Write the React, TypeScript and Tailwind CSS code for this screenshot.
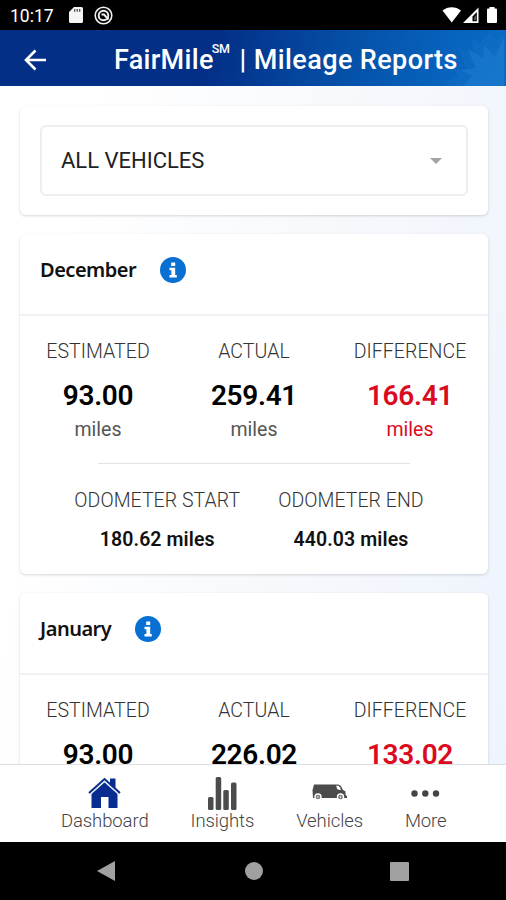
import type { ReactNode } from "react";

type Report = {
  month: string;
  estimated: string;
  actual: string;
  difference: string;
  odometerStart: string;
  odometerEnd: string;
};

const reports: Report[] = [
  {
    month: "December",
    estimated: "93.00",
    actual: "259.41",
    difference: "166.41",
    odometerStart: "180.62",
    odometerEnd: "440.03",
  },
  {
    month: "January",
    estimated: "93.00",
    actual: "226.02",
    difference: "133.02",
    odometerStart: "",
    odometerEnd: "",
  },
];

function StatusBar() {
  return (
    <div className="flex h-[30px] shrink-0 items-center bg-black pl-[10px] pr-2 text-white">
      <span className="w-[44px] pt-[3px] text-[17.5px] leading-none">10:17</span>
      <svg className="ml-[15px]" width="14" height="16" viewBox="0 0 14 16">
        <path d="M5 0h7.500A1.500 1.500 0 0 1 14 1.500v13a1.500 1.500 0 0 1-1.500 1.500h-11A1.500 1.500 0 0 1 0 14.500V5z" fill="#f5f5f5" />
        <path d="M5.700 2v2.800M8.200 2v2.800M10.700 2v2.800" stroke="#444" strokeWidth="1.200" />
      </svg>
      <svg className="ml-[11px]" width="19" height="19" viewBox="0 0 19 19" fill="none" stroke="#f0f0f0">
        <circle cx="9.500" cy="9.500" r="8.300" strokeWidth="1.600" />
        <circle cx="9.500" cy="9.500" r="4.800" strokeWidth="1.900" />
        <path d="M7.500 8.500h2.500l4.500 5" strokeWidth="1.900" />
      </svg>
      <svg className="ml-auto" width="56" height="18" viewBox="0 0 56 18">
        <path d="M0.500 4.500C5.500 0 14 0 19 4.500L9.750 16.500z" fill="#fff" />
        <path d="M36.500 1.500V17H21z" fill="#fff" />
        <path d="M34.800 6V15.300H30.500V10.500z" fill="#000" />
        <path d="M32 11.500L34 9V14.300H32z" fill="#555" />
        <path d="M47.500 1h5v1.500H54a1 1 0 0 1 1 1V16a1 1 0 0 1-1 1h-8a1 1 0 0 1-1-1V3.500a1 1 0 0 1 1-1h1.500z" fill="#fff" />
      </svg>
    </div>
  );
}

function Header() {
  return (
    <header className="relative flex h-[56px] shrink-0 items-center bg-linear-[105deg,#032f87_0%,#032f87_42%,#0550a8_68%,#0762bb_86%,#0a6bc4_100%] text-white">
      <svg className="absolute right-0 top-0" width="60" height="56" viewBox="0 0 60 56">
        <path d="M2 56L0 51L12 47L8 39L20 40L13 18L27 25L26 8L34 13L44 2L51 10L58 5V56z" fill="#1f7acb" opacity="0.22" />
        <path d="M17 56L26 46L14 40L30 38L21 18L37 28L38 15L49 27L58 8V56z" fill="#2384d4" opacity="0.4" />
      </svg>
      <button className="ml-[23px] mt-[3px] w-6" aria-label="Back">
        <svg width="24" height="22" viewBox="0 0 24 22" fill="none" stroke="#fff" strokeWidth="2.600">
          <path d="M23 11H3M12.500 1.500L3 11l9.500 9.500" />
        </svg>
      </button>
      <h1 className="relative ml-[67px] mt-[4px] flex items-center whitespace-nowrap text-[27px] font-medium leading-none tracking-[0.3px]">
        FairMile
        <span className="-ml-[2px] -mt-[22px] text-[12.500px] tracking-[-0.3px]">SM</span>
        <span className="ml-[10px] tracking-[0.4px]">| Mileage Reports</span>
      </h1>
    </header>
  );
}

function Card({ children }: { children: ReactNode }) {
  return <section className="shrink-0 rounded-[6px] bg-white shadow-[0_1px_3px_rgba(0,0,0,0.16)]">{children}</section>;
}

function InfoIcon() {
  return (
    <svg width="26" height="26" viewBox="0 0 26 26">
      <circle cx="13" cy="13" r="13" fill="#0870d2" />
      <path d="M11.200 5.500h4v3.500h-4zM9.500 10.800h5.700v7.200h1.600v2.500H9.500V18h1.900v-4.700H9.500z" fill="#fff" />
    </svg>
  );
}

function Stat({ label, value, red }: { label: string; value: string; red?: boolean }) {
  return (
    <div className="flex w-[156px] flex-col items-center">
      <span className="text-[19.500px] font-light leading-6 tracking-[0.05px] text-[#333]">{label}</span>
      <span className={`mt-[15px] text-[28px] font-semibold leading-[34px] tracking-[-0.3px] ${red ? "text-[#dc0a20]" : "text-black"}`}>{value}</span>
      <span className={`mt-[5px] text-[19.500px] leading-6 ${red ? "text-[#dc0a20]" : "text-[#555]"}`}>miles</span>
    </div>
  );
}

function Odometer({ label, value }: { label: string; value: string }) {
  return (
    <div className="flex flex-col items-center">
      <span className="text-[19.500px] font-light leading-6 tracking-[0.05px] text-[#333]">{label}</span>
      <span className="mt-[15px] text-[19.500px] font-semibold leading-6 tracking-[0.1px] text-[#111]">{value} miles</span>
    </div>
  );
}

function ReportCard({ report }: { report: Report }) {
  return (
    <Card>
      <div className="flex h-[82px] items-start border-b-2 border-[#f0f1f2] px-5 pt-[23px]">
        <h2 className="pt-px font-['Noto_Sans'] text-[20px] font-semibold leading-6 tracking-[-0.5px] text-[#111]">{report.month}</h2>
        <div className="ml-6">
          <InfoIcon />
        </div>
      </div>
      <div className="flex pt-[24px]">
        <Stat label="ESTIMATED" value={report.estimated} />
        <Stat label="ACTUAL" value={report.actual} />
        <Stat label="DIFFERENCE" value={report.difference} red />
      </div>
      {report.odometerStart && (
        <>
          <div className="mx-auto mt-[21px] h-px w-[312px] bg-[#e4e4e4]" />
          <div className="flex justify-center gap-[38px] pb-[22px] pr-[10px] pt-[25px]">
            <Odometer label="ODOMETER START" value={report.odometerStart} />
            <Odometer label="ODOMETER END" value={report.odometerEnd} />
          </div>
        </>
      )}
    </Card>
  );
}

function TabItem({ label, children }: { label: string; children: ReactNode }) {
  return (
    <button className="flex flex-col items-center">
      <span className="flex h-[36px] items-center">{children}</span>
      <span className="-mt-px text-[18.500px] font-light leading-[22px] tracking-[-0.1px] text-[#444]">{label}</span>
    </button>
  );
}

function TabBar() {
  return (
    <nav className="flex h-[78px] shrink-0 items-start gap-[42px] border-t border-[#dcdfe4] bg-white pl-[61px] pt-[10px]">
      <TabItem label="Dashboard">
        <svg width="33" height="32" viewBox="0 0 33 32">
          <path d="M22 1.500h5.500v11l-5.500-4.500z" fill="#062d8f" />
          <path d="M3.500 16.500L16.500 5L29.500 16.500V31H20.500V20H13V31H3.500z" fill="#062d8f" />
          <path d="M2 17.500L16.500 4.500L31 17.500" fill="none" stroke="#e6eaf6" strokeWidth="1.300" />
          <path d="M1 16L16.500 2L32 16" fill="none" stroke="#062d8f" strokeWidth="2" />
        </svg>
      </TabItem>
      <TabItem label="Insights">
        <svg width="29" height="33" viewBox="0 0 29 33" fill="#4c4c4c">
          <rect x="0" y="20" width="5.500" height="13" rx="1.500" />
          <rect x="7.700" y="0" width="5.500" height="33" rx="1.500" />
          <rect x="15.300" y="13" width="5.500" height="20" rx="1.500" />
          <rect x="23" y="5.500" width="5.500" height="27.500" rx="1.500" />
        </svg>
      </TabItem>
      <TabItem label="Vehicles">
        <svg className="-mt-[2px]" width="35" height="17" viewBox="0 0 35 17">
          <path d="M2 0.500H26Q28.500 0.500 29.500 3L31 6L33.500 7.500V11L35 12V14H1L0.500 6z" fill="#4c4c4c" />
          <path d="M24 1.800h2.500Q28 2.500 29 6L25.500 5.500z" fill="#fff" />
          <circle cx="6" cy="13" r="3" fill="#666" stroke="#fff" strokeWidth="1.400" />
          <circle cx="28.500" cy="13" r="3" fill="#666" stroke="#fff" strokeWidth="1.400" />
          <path d="M4.500 13h3M6 11.500v3M27 13h3M28.500 11.500v3" stroke="#ddd" strokeWidth="0.800" />
        </svg>
      </TabItem>
      <TabItem label="More">
        <svg width="29" height="7" viewBox="0 0 29 7" fill="#444">
          <circle cx="3.500" cy="3.500" r="3.200" />
          <circle cx="14.300" cy="3.500" r="3.200" />
          <circle cx="25" cy="3.500" r="3.200" />
        </svg>
      </TabItem>
    </nav>
  );
}

function SystemNav() {
  return (
    <div className="flex h-[58px] shrink-0 items-center bg-black pl-[97px]">
      <svg width="18" height="20" viewBox="0 0 18 20">
        <path d="M18 0V20L0 10z" fill="#a0a0a0" />
      </svg>
      <div className="ml-[129.500px] h-[18px] w-[18px] rounded-full bg-[#a0a0a0]" />
      <div className="ml-[127px] h-[19px] w-[19px] rounded-[1px] bg-[#a0a0a0]" />
    </div>
  );
}

export default function App() {
  return (
    <div className="flex h-[900px] w-[506px] flex-col overflow-hidden font-[Roboto,sans-serif]">
      <StatusBar />
      <Header />
      <main className="flex min-h-0 flex-1 flex-col gap-[19px] overflow-hidden bg-linear-[100deg,#ffffff_15%,#f7f9fc_55%,#eef4fd_100%] pl-5 pr-[18px] pt-5">
        <Card>
          <div className="h-[109px] px-5 pt-[19px]">
            <button className="flex h-[71px] w-full items-center rounded-[6px] border-2 border-[#eeeeef] pl-[19px] pr-[24px] text-[22px] text-[#222]">
              ALL VEHICLES
              <svg className="ml-auto" width="12" height="6" viewBox="0 0 12 6">
                <path d="M0 0H12L6 6z" fill="#a3a3a3" />
              </svg>
            </button>
          </div>
        </Card>
        {reports.map((report) => (
          <ReportCard key={report.month} report={report} />
        ))}
      </main>
      <TabBar />
      <SystemNav />
    </div>
  );
}
